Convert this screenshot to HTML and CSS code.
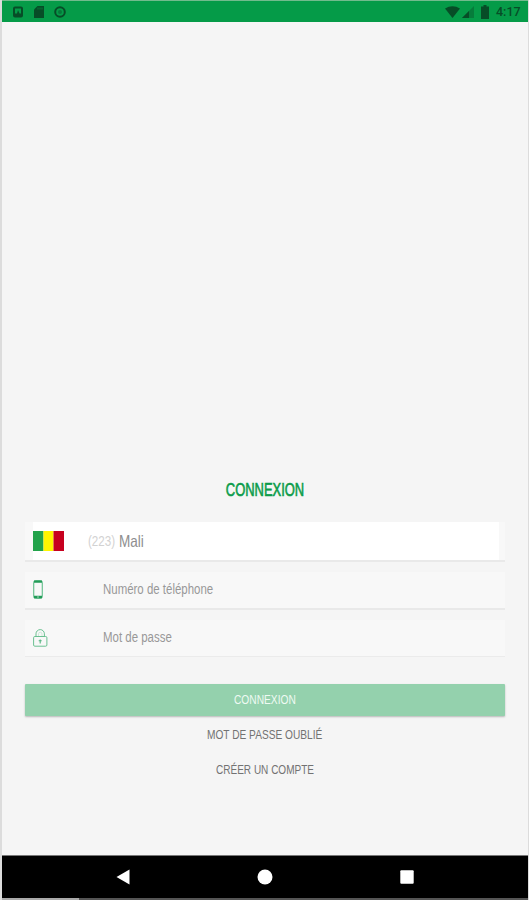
FILE: index.html
```html
<!DOCTYPE html>
<html lang="fr">
<head>
<meta charset="utf-8">
<title>Connexion</title>
<link rel="stylesheet" href="styles.css">
</head>
<body>
<div class="screen">
  <header class="status">
    <div class="status-left">
      <svg width="10" height="12" viewBox="0 0 10 12"><rect x="1" y="1.500" width="8" height="9" rx="1" fill="none" stroke="currentColor" stroke-width="2"/><path d="M2 10V7.500h2L5 4l1.500 3.500H8V10z" fill="currentColor"/></svg>
      <svg width="10" height="12" viewBox="0 0 10 12"><path d="M3.500 0H10v12H0V3.500z" fill="currentColor"/><path d="M4 1.500v2M6 1.500v2M8 1.500v2" stroke="#087a39"/></svg>
      <svg width="12" height="12" viewBox="0 0 12 12"><circle cx="6" cy="6" r="4.800" fill="none" stroke="currentColor" stroke-width="2"/><circle cx="6" cy="6" r="2" fill="currentColor" opacity=".45"/></svg>
    </div>
    <div class="status-right">
      <svg width="15" height="12" viewBox="0 0 15 12"><path d="M0 2.500Q7.500-2 15 2.500L7.500 12z" fill="currentColor"/></svg>
      <svg class="signal" width="12" height="12" viewBox="0 0 12 12"><path d="M12 0v12H0z" fill="currentColor" opacity=".4"/><path d="M7 5v7H0z" fill="currentColor"/></svg>
      <svg class="battery" width="8" height="14" viewBox="0 0 8 14"><path d="M2.500 0h3v1.500H8V14H0V1.500h2.500z" fill="currentColor"/></svg>
      <span class="clock">4:17</span>
    </div>
  </header>
  <main class="content">
    <h1 class="title"><span>CONNEXION</span></h1>
    <form class="fields">
      <div class="field country">
        <svg class="flag" width="31" height="20" viewBox="0 0 31 20"><path d="M0 0h10.500v20H0z" fill="#22a34b"/><path d="M10.500 0h10v20h-10z" fill="#fff500"/><path d="M20.500 0H31v20H20.500z" fill="#c7001f"/></svg>
        <span class="code">(223)</span>
        <span class="name">Mali</span>
      </div>
      <div class="field">
        <svg class="phone" width="10" height="19" viewBox="0 0 10 19"><rect x=".75" y=".75" width="8.500" height="17.500" rx="1.500" fill="none" stroke="#4fb67d"/><path d="M1 1.600h8M1 17h8" stroke="#239c58" stroke-width="2.400"/><path d="M4 17h2" stroke="#a5d9bb"/></svg>
        <span class="hint">Numéro de téléphone</span>
      </div>
      <div class="field last">
        <svg class="lock" width="15" height="18" viewBox="0 0 15 18"><rect x=".6" y="7.500" width="13.300" height="9.700" rx="1.200" fill="none" stroke="#6bc091"/><path d="M3 7.500V4.800a4.200 4.200 0 0 1 8.400 0v2.700" fill="none" stroke="#6bc091"/><path d="M5.500 7V5a1.750 1.750 0 0 1 3.500 0v2" fill="none" stroke="#b5dfc7" stroke-width=".6"/><path d="M7.200 10.500v4M5.700 11.800h3" stroke="#55b581" stroke-width="1.100"/></svg>
        <span class="hint">Mot de passe</span>
      </div>
    </form>
    <div class="submit"><span>CONNEXION</span></div>
    <div class="link"><span class="forgot">MOT DE PASSE OUBLIÉ</span></div>
    <div class="link"><span class="create">CRÉER UN COMPTE</span></div>
  </main>
  <nav class="navbar">
    <svg width="14" height="16" viewBox="0 0 14 16"><path d="M13.500 .5v15L.5 8z" fill="#fff"/></svg>
    <svg width="16" height="16" viewBox="0 0 16 16"><circle cx="8" cy="8" r="7.500" fill="#fff"/></svg>
    <svg width="14" height="14" viewBox="0 0 14 14"><rect x=".3" y=".3" width="13.400" height="13.400" rx="1" fill="#fff"/></svg>
  </nav>
  <div class="bottom-edge"></div>
</div>
</body>
</html>
```
FILE: styles.css
```css
* { box-sizing: border-box; }
body {
  margin: 0;
  background: #dcdcdc;
  font-family: "Liberation Sans", Arial, sans-serif;
}
svg { display: block; flex: none; }
.screen {
  width: 529px;
  height: 900px;
  padding: 0 1px 0 2px;
  display: flex;
  flex-direction: column;
  overflow: hidden;
}
.status {
  height: 22px;
  border-top: 1px solid #72bb8d;
  background: #059b48;
  color: #074d27;
  display: flex;
  justify-content: space-between;
}
.status-left, .status-right { display: flex; align-items: center; }
.status-left { padding-left: 11px; gap: 10.500px; }
.status-right { padding-right: 7px; }
.signal { margin-left: 2px; }
.battery { margin-left: 7px; }
.clock {
  width: 25px;
  margin-left: 7px;
  font: 500 12.500px/20px Roboto, sans-serif;
  white-space: nowrap;
}
.content {
  height: 833px;
  padding: 455px 23px 0;
  background: #f5f5f5;
}
.title {
  margin: 0;
  height: 26px;
  text-align: center;
  font-size: 17.500px;
  font-weight: 400;
  line-height: 26px;
  color: #0a9c49;
  -webkit-text-stroke: .6px #0a9c49;
}
.title span { display: inline-block; transform: scaleX(.74); }
.fields { margin: 19px 0 0; }
.field {
  height: 38px;
  margin-bottom: 10px;
  padding: 0 0 1px 8px;
  display: flex;
  align-items: center;
  background: #f8f8f8;
  border-bottom: 2px solid #e9e9e9;
}
.country {
  height: 40px;
  padding-bottom: 0;
  background: linear-gradient(90deg, #f8f8f8 8px, #fff 8px, #fff 474px, #f8f8f8 474px);
}
.last {
  height: 37px;
  margin-bottom: 0;
  border-bottom: 1px solid #ebebeb;
}
.code, .name, .hint {
  display: inline-block;
  white-space: nowrap;
  transform-origin: left center;
}
.code { width: 27px; margin-left: 24px; font-size: 14px; color: #d2d2d2; transform: scaleX(.83); }
.name { margin-left: 4px; font-size: 16.500px; color: #8e8e8e; transform: scaleX(.82); }
.hint { font-size: 14px; line-height: 16px; margin-bottom: 1px; color: #989898; transform: scaleX(.818); }
.phone { margin-right: 60px; }
.lock { margin-right: 55px; }
.submit {
  height: 32px;
  margin-top: 27px;
  border-radius: 1px;
  background: #94d1ad;
  box-shadow: 0 1px 2px rgba(0, 0, 0, .25);
  color: #effaf3;
  font-size: 13.500px;
  line-height: 32px;
  text-align: center;
}
.submit span, .link span { display: inline-block; }
.submit span { transform: scaleX(.757); }
.link {
  height: 35px;
  color: #727272;
  font-size: 13.500px;
  line-height: 37px;
  text-align: center;
}
.forgot { transform: scaleX(.752); }
.create { transform: scaleX(.742); }
.navbar {
  height: 43px;
  padding: 0 114px;
  border-top: 1px solid #777;
  background: #000;
  display: flex;
  align-items: center;
  justify-content: space-between;
}
.bottom-edge {
  height: 2px;
  background: linear-gradient(90deg, #aaa 77px, #555 77px);
}
```
